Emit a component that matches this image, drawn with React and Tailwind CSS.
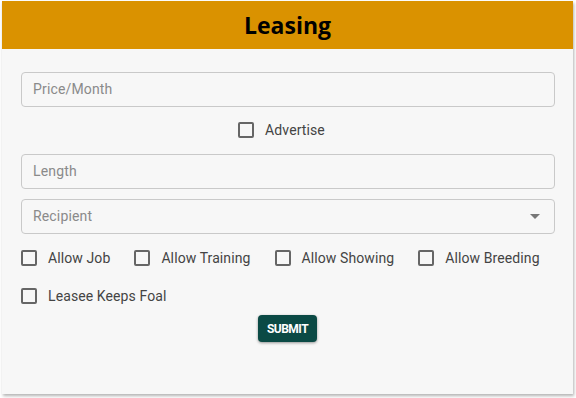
import React from "react";

function Box() {
  return <span className="inline-block w-4 h-4 border-2 border-[#666] rounded-[2px] shrink-0" />;
}

function Check({ label, className = "" }) {
  return (
    <label className={"flex items-center gap-[11px] h-[20px] " + className}>
      <Box />
      <span className="text-[14px] text-[#444] tracking-[0.1px]">{label}</span>
    </label>
  );
}

function Field({ placeholder, select }) {
  return (
    <div className="h-[35px] ml-[19px] mr-[18px] border border-[#c9c9c9] rounded-[4px] flex items-center px-[11px] justify-between">
      <span className="text-[14px] text-[#8a8a8a] tracking-[0.15px]">{placeholder}</span>
      {select && (
        <svg width="10" height="5" viewBox="0 0 10 5" className="mr-[3px]">
          <path d="M0 0 L10 0 L5 5 Z" fill="#777" />
        </svg>
      )}
    </div>
  );
}

export default function App() {
  return (
    <div className="w-[576px] h-[398px] bg-white pt-[1px] px-[2px]" style={{ fontFamily: "Roboto, 'Liberation Sans', sans-serif" }}>
      <div className="w-[571px] h-[393px] bg-[#f7f7f7] shadow-[1px_2px_3px_rgba(0,0,0,0.3)] flex flex-col">
        <div className="h-[48px] bg-[#da9200] flex items-center justify-center">
          <span className="text-[23px] font-bold text-black" style={{ fontFamily: "'Open Sans', sans-serif" }}>Leasing</span>
        </div>
        <div className="pt-[23px] flex flex-col">
          <Field placeholder="Price/Month" />
          <div className="flex justify-center mt-[13px] pr-[12px]">
            <Check label="Advertise" />
          </div>
          <div className="mt-[14px]"><Field placeholder="Length" /></div>
          <div className="mt-[10px]"><Field placeholder="Recipient" select /></div>
          <div className="flex items-center mt-[14px] pl-[19px] gap-[24px]">
            <Check label="Allow Job" />
            <Check label="Allow Training" />
            <Check label="Allow Showing" />
            <Check label="Allow Breeding" />
          </div>
          <div className="flex items-center mt-[18px] pl-[19px]">
            <Check label="Leasee Keeps Foal" />
          </div>
          <div className="flex justify-center mt-[9px]">
            <button className="h-[27px] px-[9px] bg-[#0b4a45] rounded-[4px] text-white text-[12px] font-bold tracking-[-0.5px] shadow-[0_1px_3px_rgba(0,0,0,0.4)]">SUBMIT</button>
          </div>
        </div>
      </div>
    </div>
  );
}
